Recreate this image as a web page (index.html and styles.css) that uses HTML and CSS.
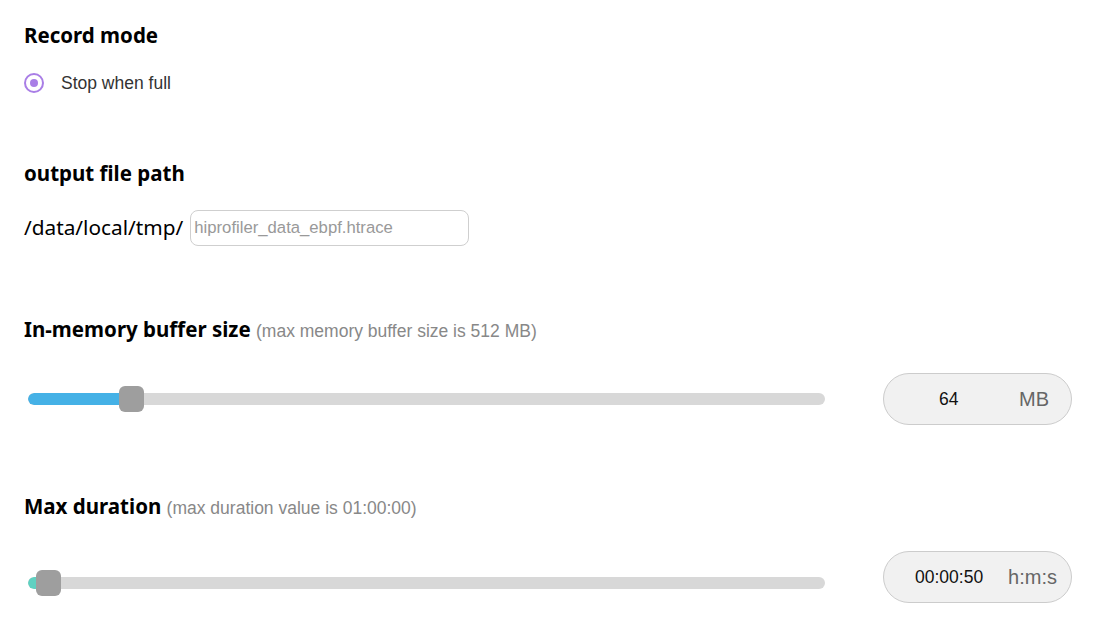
FILE: index.html
```html
<!DOCTYPE html>
<html>
<head>
<meta charset="utf-8">
<link rel="stylesheet" href="styles.css">
</head>
<body>
<div class="page">
  <section class="sec sec-mode">
    <h2 class="title">Record mode</h2>
    <label class="radio-row">
      <span class="radio"><span class="radio-dot"></span></span>
      <span class="radio-label">Stop when full</span>
    </label>
  </section>

  <section class="sec sec-path">
    <h2 class="title">output file path</h2>
    <div class="path-row">
      <span class="path-prefix">/data/local/tmp/</span>
      <input class="path-input" type="text" placeholder="hiprofiler_data_ebpf.htrace">
    </div>
  </section>

  <section class="sec sec-buffer">
    <h2 class="title">In-memory buffer size <span class="hint">(max memory buffer size is 512 MB)</span></h2>
    <div class="slider-row">
      <div class="slider">
        <div class="track">
          <div class="fill fill-blue" style="width: 100px"></div>
        </div>
        <div class="thumb" style="left: 91px"></div>
      </div>
      <div class="value-box box-mb">
        <span class="value">64</span>
        <span class="unit">MB</span>
      </div>
    </div>
  </section>

  <section class="sec sec-duration">
    <h2 class="title">Max duration <span class="hint">(max duration value is 01:00:00)</span></h2>
    <div class="slider-row">
      <div class="slider slider-low">
        <div class="track">
          <div class="fill fill-teal" style="width: 14px"></div>
        </div>
        <div class="thumb" style="left: 8px"></div>
      </div>
      <div class="value-box box-time">
        <span class="value">00:00:50</span>
        <span class="unit">h:m:s</span>
      </div>
    </div>
  </section>
</div>
</body>
</html>
```

FILE: styles.css
```css
html, body {
  margin: 0;
  padding: 0;
  background: #ffffff;
}

.page {
  width: 1096px;
  padding: 21px 24px 0 24px;
  box-sizing: border-box;
  font-family: "Liberation Sans", Arial, sans-serif;
  color: #000;
}

.title {
  margin: 0;
  font-family: "Noto Sans", "Open Sans", sans-serif;
  font-weight: 700;
  font-size: 20.5px;
  line-height: 28px;
  color: #000;
}

.hint {
  font-family: "Liberation Sans", Arial, sans-serif;
  font-weight: 400;
  font-size: 17.5px;
  color: #888;
}

.radio-row {
  display: flex;
  align-items: center;
  margin-top: 24px;
  height: 20px;
}

.radio {
  width: 20px;
  height: 20px;
  box-sizing: border-box;
  border: 2px solid #a97ee6;
  border-radius: 50%;
  display: flex;
  align-items: center;
  justify-content: center;
}

.radio-dot {
  width: 8px;
  height: 8px;
  border-radius: 50%;
  background: #a97ee6;
}

.radio-label {
  margin-left: 17px;
  font-size: 17.5px;
  color: #333;
}

.sec-path {
  margin-top: 66px;
}

.path-row {
  display: flex;
  align-items: center;
  margin-top: 23px;
}

.path-prefix {
  font-family: "Noto Sans", "Open Sans", sans-serif;
  font-size: 20.8px;
  color: #000;
  margin-top: -2px;
}

.path-input {
  margin-left: 7px;
  width: 279px;
  height: 36px;
  box-sizing: border-box;
  border: 1px solid #cfcfcf;
  border-radius: 8px;
  padding: 0 3px;
  font-family: "Liberation Sans", Arial, sans-serif;
  font-size: 16.7px;
  outline: none;
}

.path-input::placeholder {
  color: #999;
}

.sec-buffer {
  margin-top: 69px;
}

.sec-duration {
  margin-top: 67px;
}

.slider-row {
  display: flex;
  align-items: center;
  margin-top: 28px;
}

.sec-duration .slider-row {
  margin-top: 29px;
}

.slider {
  position: relative;
  width: 797px;
  height: 26px;
  margin-left: 4px;
  display: flex;
  align-items: center;
}

.slider-low {
  margin-top: 12px;
}

.track {
  width: 100%;
  height: 12px;
  border-radius: 6px;
  background: #d8d8d8;
  overflow: hidden;
}

.fill {
  height: 100%;
  border-radius: 6px 0 0 6px;
}

.fill-blue {
  background: #45b1e6;
}

.fill-teal {
  background: #5fd1c1;
}

.thumb {
  position: absolute;
  top: 0;
  width: 25px;
  height: 26px;
  border-radius: 6px;
  background: #9e9e9e;
}

.value-box {
  margin-left: 58px;
  width: 189px;
  height: 52px;
  box-sizing: border-box;
  border: 1px solid #cccccc;
  border-radius: 26px;
  background: #f1f1f1;
  display: flex;
  align-items: center;
  justify-content: space-between;
}

.box-mb {
  padding: 0 22px 0 55px;
}

.box-time {
  padding: 0 14px 0 31px;
}

.value {
  font-size: 17.5px;
  color: #111;
}

.unit {
  font-size: 20px;
  color: #666;
}
```
